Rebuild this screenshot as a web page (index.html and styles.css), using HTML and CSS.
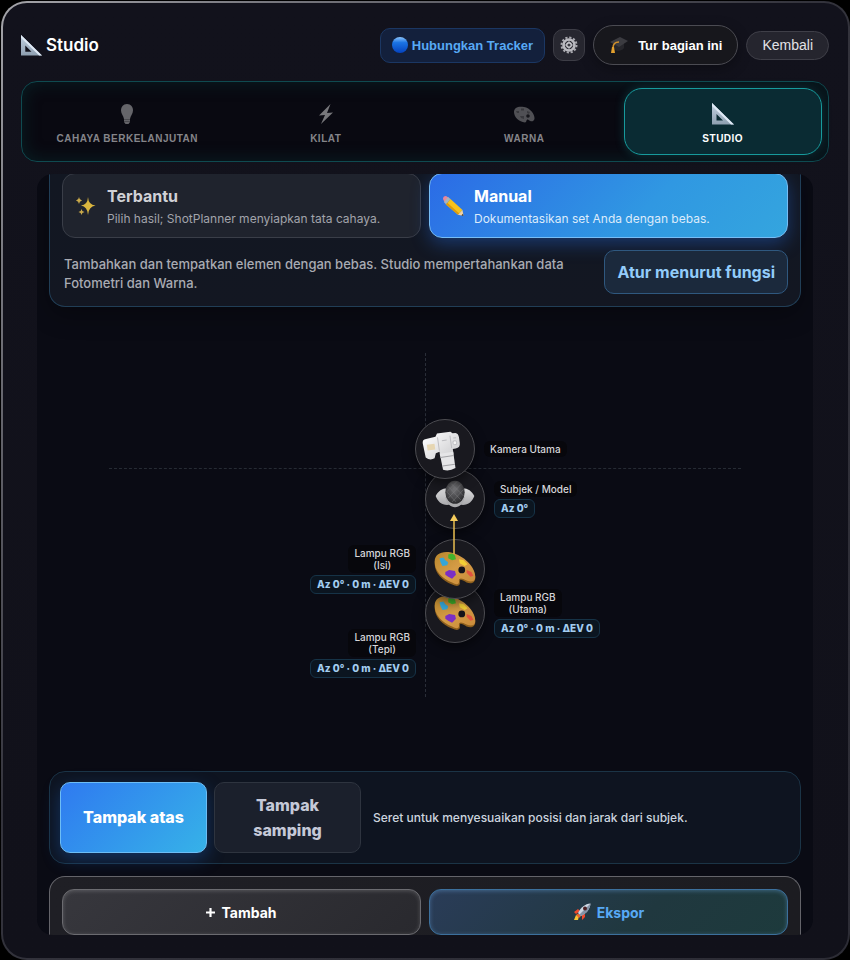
FILE: index.html
```html
<!DOCTYPE html>
<html lang="id">
<head>
  <meta charset="UTF-8" />
  <meta name="viewport" content="width=device-width, initial-scale=1" />
  <title>Studio</title>
  <link rel="stylesheet" href="styles.css">
</head>

<body>

<!-- Shared icons -->
<svg class="defs" aria-hidden="true">
  <defs>
    <linearGradient id="steel" x1="0" y1="0" x2="0" y2="1">
      <stop offset="0" stop-color="#c3d2e2" />
      <stop offset="1" stop-color="#8e9fb0" />
    </linearGradient>
    <linearGradient id="blueBall" x1="0" y1="0" x2="0" y2="1">
      <stop offset="0" stop-color="#8cc4fa" />
      <stop offset="0.35" stop-color="#1b74e4" />
      <stop offset="1" stop-color="#0542bd" />
    </linearGradient>
    <linearGradient id="wood" x1="0" y1="0" x2="1" y2="1">
      <stop offset="0" stop-color="#b8862c" />
      <stop offset="0.5" stop-color="#d59c46" />
      <stop offset="1" stop-color="#c98a3a" />
    </linearGradient>
    <linearGradient id="body" x1="0" y1="0" x2="1" y2="1">
      <stop offset="0" stop-color="#ffffff" />
      <stop offset="1" stop-color="#c9c9cc" />
    </linearGradient>
    <linearGradient id="shoulder" x1="0" y1="0" x2="0" y2="1">
      <stop offset="0" stop-color="#dededf" />
      <stop offset="1" stop-color="#a9a9ac" />
    </linearGradient>
    <radialGradient id="hair" cx="0.45" cy="0.35" r="0.7">
      <stop offset="0" stop-color="#77777a" />
      <stop offset="1" stop-color="#232326" />
    </radialGradient>
    <symbol id="ruler" viewBox="0 0 22 22">
      <path fill="url(#steel)" fill-rule="evenodd" d="M0 0 L22 21.500 H0 Z M4.500 11 V17.500 H11 Z" />
      <path fill="#dfe9f5" d="M0 0 L22 21.500 H19 L0 3 Z" />
    </symbol>
    <symbol id="palette" viewBox="0 0 44 38">
      <path fill="#8d5f1d" d="M1 13 C1 5 8 1 18 3 C31 6 43 18 43 28 C43 33 39 35 34 33 C29 30 27 29 27 32 C28 37 24 37.500 19 35 C9 31 1 23 1 14 Z" />
      <path fill="url(#wood)" d="M1 11 C1 4 8 0 18 2 C31 5 43 17 43 27 C43 32 39 33 34 31 C29 28 26 28 26 31 C27 35 24 36 19 33 C9 29 1 21 1 12 Z" />
      <circle cx="29" cy="20" r="3.500" fill="#15131a" />
      <path fill="#35a6d8" d="M6 8 l4 -1 2 3 3 2 -1 3 -5 1 -2 -4 z" />
      <path fill="#43b52c" d="M15 4 l4 -1 3 2 1 4 -4 1 -4 -2 z" />
      <path fill="#f2cf35" d="M26 9 l5 1 4 4 -3 2 -5 -3 z" />
      <path fill="#e2523f" d="M34 20 l5 2 2 4 -3 1 -4 -4 z" />
      <path fill="#7b2fc4" d="M12 22 l4 -2 6 1 1 4 -4 4 -4 -2 -3 -2 z" />
    </symbol>
  </defs>
</svg>

<div class="modal">

  <header class="header">
    <h1 class="title">
      <svg class="title-icon"><use href="#ruler" /></svg>
      Studio
    </h1>
    <div class="header-actions">
      <button class="btn-tracker">
        <svg class="ball" viewBox="0 0 16 16"><circle cx="8" cy="8" r="8" fill="url(#blueBall)" /></svg>
        Hubungkan Tracker
      </button>
      <button class="btn-gear" aria-label="Pengaturan">
        <svg viewBox="0 0 18 18">
          <circle cx="9" cy="9" r="7.500" fill="none" stroke="#a9a9af" stroke-width="2" stroke-dasharray="2.200 1.727" />
          <circle cx="9" cy="9" r="5.500" fill="none" stroke="#b9b9bf" stroke-width="2.600" />
          <circle cx="9" cy="9" r="2.300" fill="#3a3a42" stroke="#d0d0d5" stroke-width="1.400" />
          <path stroke="#b9b9c0" stroke-width="1" d="M9 4 V7 M9 11 V14 M4 9 H7 M11 9 H14" />
        </svg>
      </button>
      <button class="btn-tour">
        <svg viewBox="0 0 20 18">
          <path fill="#26262b" d="M5 8 V13 C8 16 13 15 15 12 V7 Z" />
          <path fill="#3b3b40" d="M1 6 L11 1 L19 5 L10 11 Z" />
          <path fill="none" stroke="#d4922a" stroke-width="1.500" d="M10 6 C6 6 4 8 4 12" />
          <path fill="#e3a02e" d="M3 11 H5 L6 17 H2 Z" />
        </svg>
        Tur bagian ini
      </button>
      <button class="btn-back">Kembali</button>
    </div>
  </header>

  <nav class="tabs">
    <button class="tab">
      <svg viewBox="0 0 22 22"><path fill="#65656a" d="M11 1 C7 1 5 4 5 7.500 C5 11 7.500 12.500 8 16 V19 L9.500 21 H12.500 L14 19 V16 C14.500 12.500 17 11 17 7.500 C17 4 15 1 11 1 Z" /><path stroke="#4a4a4f" d="M8 16.500 H14 M8 18.500 H14" /></svg>
      <span>Cahaya berkelanjutan</span>
    </button>
    <button class="tab">
      <svg viewBox="0 0 22 22"><path fill="#77777b" d="M15.500 1 L4 12.500 L10 12 L6 21 L18 9.500 L12 10 Z" /></svg>
      <span>Kilat</span>
    </button>
    <button class="tab">
      <svg viewBox="0 0 22 22">
        <path fill="#505055" d="M1 9 C1 4 6 3 11 4 C17 5 22 11 21.500 16 C20 20 17 18 15 16.500 C13 16 14 19 12 19.500 C6 19 1 14 1 9 Z" />
        <path fill="#38383d" d="M3 8 l3 0 0 2 -2 0 z M8 5.500 h3 v2 h-3 z M14 8 l3 1 -1 2 -2 -1 z M7 13 l4 0 0 3 -3 -1 z" />
        <circle cx="15" cy="13" r="1.800" fill="#15151b" />
      </svg>
      <span>Warna</span>
    </button>
    <button class="tab active" aria-current="page">
      <svg><use href="#ruler" /></svg>
      <span>Studio</span>
    </button>
  </nav>

  <main class="content">

    <section class="mode-card">
      <div class="modes">
        <button class="mode">
          <svg viewBox="0 0 22 22">
            <path fill="#d9b53f" d="M13 2 Q13.500 10 20.500 10.500 Q13.500 11.500 13 20 Q12.500 11.500 6 10.500 Q12.500 10 13 2 Z" />
            <path fill="#c9a94b" d="M4 2 Q4.300 5 7 5.500 Q4.300 6 4 9 Q3.700 6 1 5.500 Q3.700 5 4 2 Z" />
            <path fill="#c9a94b" d="M6.500 14 Q6.800 16.700 9.500 17 Q6.800 17.300 6.500 20 Q6.200 17.300 3.500 17 Q6.200 16.700 6.500 14 Z" />
          </svg>
          <span class="mode-text">
            <strong>Terbantu</strong>
            <small>Pilih hasil; ShotPlanner menyiapkan tata cahaya.</small>
          </span>
        </button>
        <button class="mode active">
          <svg viewBox="0 0 22 22">
            <path fill="#e9879a" d="M1 4 Q1 1 4 1 L7 3 L3 8 Z" />
            <path fill="#a8b3bd" d="M6 2 L8.500 4 L4 9.500 L2 7 Z" />
            <path fill="#f7c21c" d="M8.500 4 L20.500 15 L16 19.800 L4 9.500 Z" />
            <path fill="#d99a10" d="M5.300 7.800 L4 9.500 L16 19.800 L17.300 18.400 Z" />
            <path fill="#f3d3a2" d="M20.500 15 L21.500 21 L16 19.800 Z" />
            <path fill="#333" d="M21 18.700 L21.500 21 L19.300 20.400 Z" />
          </svg>
          <span class="mode-text">
            <strong>Manual</strong>
            <small>Dokumentasikan set Anda dengan bebas.</small>
          </span>
        </button>
      </div>
      <div class="mode-note">
        <p>Tambahkan dan tempatkan elemen dengan bebas. Studio mempertahankan data Fotometri dan Warna.</p>
        <button class="btn-arrange">Atur menurut fungsi</button>
      </div>
    </section>

    <section class="stage">
      <div class="axis-x"></div>
      <div class="axis-y"></div>

      <div class="node subject">
        <svg viewBox="0 0 60 60">
          <path fill="url(#shoulder)" d="M10 27 C13 21 18 18 24 19 H36 C42 18 47 21 50 27 C48 33 43 37 36 36 H24 C17 37 12 33 10 27 Z" />
          <path fill="#aaaaad" d="M20 28 C22 42 38 42 40 28 Z" />
          <ellipse cx="30" cy="23" rx="10" ry="12" fill="url(#hair)" />
          <path fill="none" stroke="#8b8b8f" stroke-width="0.400" d="M23 17 L36 31 M26 14 L39 27 M22 23 L31 33 M36 15 L23 29 M32 12 L21 23 M39 20 L27 33" />
        </svg>
      </div>
      <div class="node camera">
        <svg viewBox="0 0 60 60">
          <g transform="rotate(-8 30 30)">
            <path fill="url(#body)" d="M8 21 Q8 17 12 17 L22 16 L24 13 H38 L40 15 H43 Q46 16 46 20 V26 Q46 31 41 31 H38 V37 H24 V32 L20 33 L18 38 Q13 40 9 36 Z" />
            <path fill="#e5e5e7" d="M24 34 H38 V51 Q31 54 25 51 Z" />
            <path fill="none" stroke="#a2a2a6" d="M24 38 H38 M25 47 H38" />
            <path fill="#e6d6b2" d="M12 23 H20 V29 H12 Z" />
            <path fill="none" stroke="#bcbcc0" d="M24 17 V31 M37 17 V30 M28 21 H33 M40 20 H43" />
            <circle cx="41" cy="25" r="2" fill="#f4f4f4" stroke="#c0c0c4" />
          </g>
        </svg>
      </div>
      <div class="node key"><svg viewBox="0 0 60 60"><use href="#palette" x="8" y="11" width="44" height="38" /></svg></div>
      <div class="node fill"><svg viewBox="0 0 60 60"><use href="#palette" x="8" y="11" width="44" height="38" /></svg></div>
      <svg class="arrow" viewBox="0 0 10 40"><path stroke="#e8be50" stroke-width="1.500" d="M5 6 V40" /><path fill="#f5cc5c" d="M5 0 L9 7 H1 Z" /></svg>

      <div class="tag tag-camera"><span class="name">Kamera Utama</span></div>
      <div class="tag tag-subject"><span class="name">Subjek / Model</span><span class="badge">Az 0°</span></div>
      <div class="tag tag-key"><span class="name">Lampu RGB<br>(Utama)</span><span class="badge">Az 0° · 0 m · ΔEV 0</span></div>
      <div class="tag tag-fill left"><span class="name">Lampu RGB<br>(Isi)</span><span class="badge">Az 0° · 0 m · ΔEV 0</span></div>
      <div class="tag tag-rim left"><span class="name">Lampu RGB<br>(Tepi)</span><span class="badge">Az 0° · 0 m · ΔEV 0</span></div>
    </section>

    <section class="view-bar">
      <button class="view active">Tampak atas</button>
      <button class="view">Tampak samping</button>
      <p>Seret untuk menyesuaikan posisi dan jarak dari subjek.</p>
    </section>

    <section class="toolbar">
      <button class="btn-add">
        <svg viewBox="0 0 10 10"><path stroke="#fff" stroke-width="2.400" d="M5 0 V10 M0 5 H10" /></svg>
        Tambah
      </button>
      <button class="btn-export">
        <svg viewBox="0 0 18 18">
          <path fill="#f0492c" d="M1 9 L5 6 L7 8 L3 11 Z M9 12 L12 11 L12 14 L9 17 Z" />
          <path fill="#f7c531" d="M1 17 L3 12 L6 13 L5 17 Z" />
          <path fill="#e8662c" d="M3 12 L5 10.500 L8 13 L6 15 Z" />
          <path fill="#cdd6e2" d="M17.500 0.500 C12 1 8 4 5 10 L8 13 C14 10 17 6 17.500 0.500 Z" />
          <path fill="#8391a5" d="M17.500 0.500 C17 6 14 10 8 13 L6.500 11.500 Z" />
          <circle cx="12" cy="5.500" r="2" fill="#4b1f22" />
        </svg>
        Ekspor
      </button>
    </section>

  </main>
</div>

</body>
</html>
```
FILE: styles.css
```css
* {
  box-sizing: border-box;
}

body {
  margin: 0;
  padding: 1px 0 0 1px;
  min-height: 100vh;
  display: flex;
  background: #000;
  color: #fff;
  font-family: Inter, "Liberation Sans", sans-serif;
}

button {
  font-family: inherit;
  color: inherit;
  cursor: pointer;
}

h1, p {
  margin: 0;
}

.defs {
  position: absolute;
  width: 0;
  height: 0;
}

.modal {
  flex: 1;
  display: flex;
  flex-direction: column;
  gap: 12px;
  padding: 22px 19px 23px 18px;
  border: 2px solid transparent;
  border-radius: 26px;
  background:
    linear-gradient(#12121c, #11111a) padding-box,
    linear-gradient(135deg, #a5a5aa 0%, #77777e 15%, #33333c 45%, #2c2c35 100%) border-box;
}

/* Header */
.header {
  display: flex;
  justify-content: space-between;
  align-items: center;
  height: 40px;
  margin-bottom: 4px;
}

.title {
  display: flex;
  align-items: center;
  gap: 4px;
  font-size: 17px;
  font-weight: 600;
}

.title-icon {
  width: 21px;
  height: 21px;
}

.header-actions {
  display: flex;
  align-items: center;
  gap: 8px;
}

.header-actions button {
  display: flex;
  align-items: center;
  justify-content: center;
  font-family: "Liberation Sans", Arial, sans-serif;
}

.btn-tracker {
  gap: 4px;
  height: 35px;
  padding: 0 11px;
  font-size: 13px;
  font-weight: 700;
  color: #57a9f5;
  background: #13203c;
  border: 1px solid #1b3763;
  border-radius: 10px;
}

.ball {
  width: 16px;
  height: 16px;
}

.btn-gear {
  width: 32px;
  height: 32px;
  padding: 0;
  background: #272730;
  border: 1px solid #3d3d46;
  border-radius: 10px;
}

.btn-gear svg {
  width: 18px;
  height: 18px;
}

.btn-tour {
  gap: 9px;
  height: 40px;
  padding: 0 15px;
  font-size: 13px;
  font-weight: 700;
  background: #17171c;
  border: 1px solid #4b4b52;
  border-radius: 20px;
  box-shadow: 0 4px 14px rgba(0, 0, 0, 0.3);
}

.btn-tour svg {
  width: 20px;
  height: 18px;
}

.header .btn-back {
  height: 29px;
  padding: 0 15px;
  font-size: 14px;
  color: #e2e2e6;
  background: #25252e;
  border: 1px solid #3f3f48;
  border-radius: 15px;
}

/* Tabs */
.tabs {
  display: grid;
  grid-template-columns: repeat(4, 1fr);
  padding: 6px;
  background: #090911;
  border: 1px solid #0f4a50;
  border-radius: 16px;
  box-shadow: inset 0 0 18px rgba(8, 60, 60, 0.45);
}

.tab {
  display: flex;
  flex-direction: column;
  align-items: center;
  justify-content: center;
  gap: 8px;
  height: 67px;
  padding: 4px 0 0;
  font-family: "Liberation Sans", Arial, sans-serif;
  font-size: 10px;
  line-height: 12px;
  font-weight: 700;
  letter-spacing: 0.5px;
  text-transform: uppercase;
  color: #85858a;
  background: none;
  border: 1px solid transparent;
  border-radius: 18px;
}

.tab svg {
  width: 22px;
  height: 22px;
}

.tab.active {
  color: #fff;
  background: #0a2b33;
  border-color: #179a9c;
  box-shadow: 0 0 10px rgba(20, 150, 150, 0.3);
}

/* Scrolling content */
.content {
  flex: 1;
  display: flex;
  flex-direction: column;
  margin: 0 16px;
  padding: 0 12px;
  overflow: hidden;
  background: #0a0b14;
  border-radius: 16px;
}

.mode-card {
  padding: 0 12px 12px;
  background: linear-gradient(#121722, #131722);
  border: 1px solid #213e56;
  border-top: 0;
  border-radius: 0 0 16px 16px;
  box-shadow: 0 8px 24px rgba(0, 0, 0, 0.3);
}

.modes {
  display: grid;
  grid-template-columns: 1fr 1fr;
  gap: 8px;
  margin-top: -1px;
}

.mode {
  display: flex;
  align-items: center;
  gap: 10px;
  height: 65px;
  padding: 0 12px;
  text-align: left;
  color: #d0d1d6;
  background: #1f232d;
  border: 1px solid #3a3e48;
  border-radius: 13px;
}

.mode svg {
  width: 22px;
  height: 22px;
}

.mode-text {
  display: flex;
  flex-direction: column;
  gap: 4px;
  padding-top: 2px;
}

.mode strong {
  font-size: 16px;
  line-height: 20px;
  font-weight: 700;
}

.mode small {
  font-size: 12px;
  line-height: 18px;
  color: #a2a4ab;
}

.mode.active {
  color: #fff;
  background: linear-gradient(135deg, #2b6be6, #3098e2 60%, #34a5de);
  border-color: #77bdf5;
  box-shadow: 0 6px 18px rgba(35, 105, 220, 0.4);
}

.mode.active small {
  color: #dcebfb;
}

.mode-note {
  display: flex;
  align-items: center;
  justify-content: space-between;
  gap: 16px;
  margin-top: 12px;
}

.mode-note p {
  flex: 1;
  padding: 5px 2px 0;
  align-self: flex-start;
  font-size: 13px;
  line-height: 19px;
  font-weight: 500;
  color: #a9abb3;
}

.btn-arrange {
  height: 44px;
  padding: 0 12px;
  font-size: 16px;
  font-weight: 700;
  color: #93ccfa;
  background: #1b293c;
  border: 1px solid #2f587f;
  border-radius: 10px;
}

/* Lighting plan */
.stage {
  position: relative;
  flex: 1;
  min-height: 464px;
}

.axis-x {
  position: absolute;
  top: 161px;
  left: 8%;
  right: 8%;
  border-top: 1px dashed #262b34;
}

.axis-y {
  position: absolute;
  top: 46px;
  left: 50%;
  height: 344px;
  border-left: 1px dashed #2a2e38;
}

.node {
  position: absolute;
  left: 50%;
  width: 60px;
  height: 60px;
  background: #19191f;
  border: 1px solid #4c4c51;
  border-radius: 50%;
  box-shadow: 0 4px 12px rgba(0, 0, 0, 0.5);
}

.node svg {
  display: block;
  width: 58px;
  height: 58px;
}

.camera {
  top: 112px;
  margin-left: -10px;
}

.subject {
  top: 162px;
}

.fill {
  top: 232px;
}

.key {
  top: 276px;
}

.arrow {
  position: absolute;
  top: 207px;
  left: calc(50% + 24px);
  width: 10px;
  height: 40px;
}

.tag {
  position: absolute;
  left: calc(50% + 69px);
  display: flex;
  flex-direction: column;
  align-items: flex-start;
  gap: 2px;
}

.tag.left {
  left: auto;
  right: calc(50% + 9px);
  align-items: flex-end;
}

.name {
  padding: 2px 6px;
  font-size: 10px;
  line-height: 12px;
  font-weight: 500;
  text-align: center;
  color: #d6d6da;
  background: #07070c;
  border-radius: 6px;
}

.badge {
  padding: 2px 6px;
  font-size: 10px;
  line-height: 13px;
  font-weight: 800;
  color: #a3cdf0;
  background: #0b1520;
  border: 1px solid #163347;
  border-radius: 6px;
}

.tag-camera {
  top: 134px;
  margin-left: -10px;
}

.tag-subject {
  top: 174px;
}

.tag-key {
  top: 282px;
}

.tag-fill {
  top: 238px;
}

.tag-rim {
  top: 322px;
}

/* View switch */
.view-bar {
  display: flex;
  align-items: center;
  gap: 7px;
  margin-bottom: 12px;
  padding: 10px;
  background: #0e1420;
  border: 1px solid #1b3446;
  border-radius: 16px;
}

.view {
  width: 147px;
  height: 71px;
  padding: 0 20px;
  font-size: 16px;
  line-height: 25px;
  font-weight: 800;
  color: #c5c9d8;
  background: #1b202c;
  border: 1px solid #2e343f;
  border-radius: 10px;
}

.view.active {
  color: #fff;
  background: linear-gradient(135deg, #2f7af0, #36b2e8);
  border-color: #6dbdf5;
  box-shadow: 0 6px 18px rgba(30, 110, 220, 0.35);
}

.view-bar p {
  margin-left: 5px;
  font-size: 12px;
  font-weight: 500;
  color: #ccd4df;
}

/* Bottom actions */
.toolbar {
  display: grid;
  grid-template-columns: 1fr 1fr;
  gap: 8px;
  padding: 12px 12px 0;
  background: linear-gradient(90deg, #1f1f25, #1c1c21);
  border: 1px solid #64646a;
  border-bottom: 0;
  border-radius: 16px 16px 0 0;
}

.toolbar button {
  display: flex;
  align-items: center;
  justify-content: center;
  gap: 6px;
  height: 46px;
  font-size: 14px;
  font-weight: 700;
  border-radius: 12px;
}

.btn-add {
  background: linear-gradient(135deg, #37373d, #29292e);
  border: 1px solid #6b6b70;
  box-shadow: inset 0 1px 4px rgba(255, 255, 255, 0.2);
}

.btn-add svg {
  width: 9px;
  height: 9px;
}

.btn-export {
  color: #57a9f5;
  background: linear-gradient(135deg, #2a3c58, #20383f 60%, #1d3a3c);
  border: 1px solid #3c709c;
  box-shadow: inset 0 1px 4px rgba(120, 190, 255, 0.35);
}

.btn-export svg {
  width: 18px;
  height: 18px;
}
```
